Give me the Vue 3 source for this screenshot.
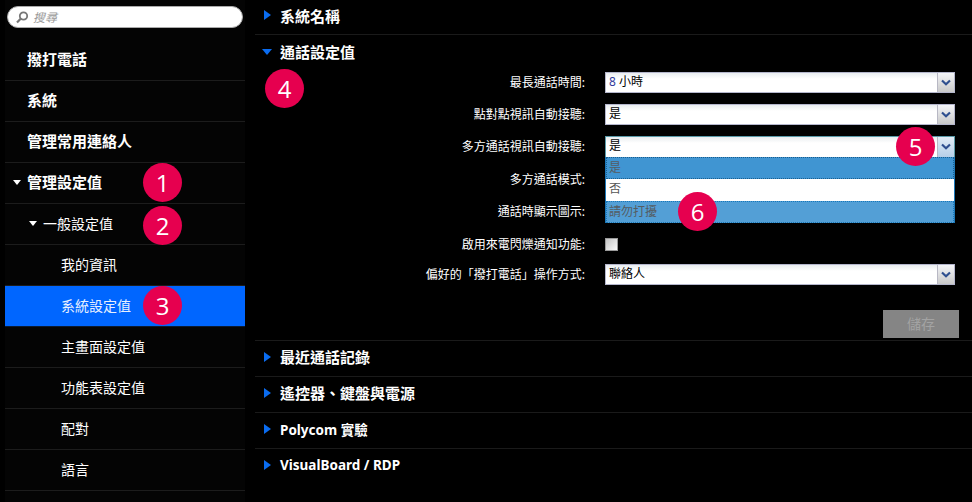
<script setup>
const nav = [
  { label: '撥打電話', level: 0 },
  { label: '系統', level: 0 },
  { label: '管理常用連絡人', level: 0 },
  { label: '管理設定值', level: 0, open: true },
  { label: '一般設定值', level: 1, open: true },
  { label: '我的資訊', level: 2 },
  { label: '系統設定值', level: 2, active: true },
  { label: '主畫面設定值', level: 2 },
  { label: '功能表設定值', level: 2 },
  { label: '配對', level: 2 },
  { label: '語言', level: 2 },
]
const after = [
  { label: '最近通話記錄' },
  { label: '遙控器、鍵盤與電源' },
  { label: 'Polycom 實驗', tight: true },
  { label: 'VisualBoard / RDP', tight: true },
]
const badges = [
  { n: 1, x: 143, y: 163 },
  { n: 2, x: 143, y: 206 },
  { n: 3, x: 143, y: 286 },
  { n: 4, x: 265, y: 69 },
  { n: 5, x: 896, y: 127 },
  { n: 6, x: 678, y: 192 },
]
</script>

<template>
  <div class="page">
    <aside class="sidebar">
      <div class="search">
        <svg class="mag" width="13" height="13" viewBox="0 0 13 13">
          <circle cx="7.5" cy="5" r="3.700" fill="none" stroke="#777" stroke-width="1.800" />
          <path d="M4.900 7.600 1 11.600" stroke="#777" stroke-width="2.200" fill="none" />
        </svg>
        <span class="search-text">搜尋</span>
      </div>
      <nav class="nav">
        <div
          v-for="item in nav"
          :key="item.label"
          class="nav-item"
          :class="['lv' + item.level, { active: item.active }]"
        >
          <span v-if="item.open" class="tri"></span>
          <span>{{ item.label }}</span>
        </div>
      </nav>
    </aside>

    <main class="main">
      <div class="section first">
        <span class="arrow-r"></span><span>系統名稱</span>
      </div>
      <div class="section open">
        <span class="arrow-d"></span><span>通話設定值</span>
      </div>

      <div class="form">
        <div class="row">
          <label>最長通話時間:</label>
          <div class="select"><span class="val"><span class="eight">8</span> 小時</span><span class="btn"><svg width="12" height="8" viewBox="0 0 12 8"><path d="M2 1.500 6 5.200 10 1.500" fill="none" stroke="#2f4f8f" stroke-width="2.200" /></svg></span></div>
        </div>
        <div class="row">
          <label>點對點視訊自動接聽:</label>
          <div class="select"><span class="val">是</span><span class="btn"><svg width="12" height="8" viewBox="0 0 12 8"><path d="M2 1.500 6 5.200 10 1.500" fill="none" stroke="#2f4f8f" stroke-width="2.200" /></svg></span></div>
        </div>
        <div class="row">
          <label>多方通話視訊自動接聽:</label>
          <div class="select-wrap">
            <div class="select focus"><span class="val">是</span><span class="btn hot"><svg width="12" height="8" viewBox="0 0 12 8"><path d="M2 1.500 6 5.200 10 1.500" fill="none" stroke="#2f4f8f" stroke-width="2.200" /></svg></span></div>
            <div class="menu">
              <div class="opt sel">是</div>
              <div class="opt">否</div>
              <div class="opt hover">請勿打擾</div>
            </div>
          </div>
        </div>
        <div class="row r33">
          <label>多方通話模式:</label>
        </div>
        <div class="row">
          <label>通話時顯示圖示:</label>
        </div>
        <div class="row r34">
          <label>啟用來電閃爍通知功能:</label>
          <span class="check"></span>
        </div>
        <div class="row last">
          <label>偏好的「撥打電話」操作方式:</label>
          <div class="select"><span class="val">聯絡人</span><span class="btn"><svg width="12" height="8" viewBox="0 0 12 8"><path d="M2 1.500 6 5.200 10 1.500" fill="none" stroke="#2f4f8f" stroke-width="2.200" /></svg></span></div>
        </div>
        <div class="actions"><button class="save" type="button">儲存</button></div>
      </div>

      <div v-for="s in after" :key="s.label" class="section" :class="{ tight: s.tight }">
        <span class="arrow-r"></span><span>{{ s.label }}</span>
      </div>
    </main>

    <span
      v-for="b in badges"
      :key="b.n"
      class="badge"
      :style="{ left: b.x + 'px', top: b.y + 'px' }"
    >{{ b.n }}</span>
  </div>
</template>

<style>
html, body { margin: 0; background: #000; }
</style>

<style scoped>
.page {
  position: relative;
  display: flex;
  width: 972px;
  height: 502px;
  overflow: hidden;
  background: #000;
  color: #fff;
  font-family: "Noto Sans", "Noto Sans CJK TC", sans-serif;
}
.sidebar {
  width: 240px;
  margin-left: 5px;
  flex: none;
  background: #040404;
}
.search {
  box-sizing: border-box;
  display: flex;
  align-items: center;
  gap: 4px;
  width: 236px;
  height: 22px;
  margin: 6px 0 0 2px;
  padding-left: 8px;
  background: #fff;
  border: 1px solid #aaa;
  border-radius: 11px;
}
.search-text {
  font-size: 12px;
  font-style: italic;
  color: #999;
}
.nav { margin-top: 12px; }
.nav-item {
  box-sizing: border-box;
  display: flex;
  align-items: center;
  height: 41px;
  border-bottom: 1px solid #1c1c1c;
  padding-left: 22px;
  padding-bottom: 4px;
  font-size: 15px;
  font-weight: 700;
}
.nav-item.lv1 {
  padding-left: 38px;
  padding-bottom: 3px;
  font-size: 14px;
  font-weight: 400;
}
.nav-item.lv2 {
  padding-left: 56px;
  padding-bottom: 3px;
  font-size: 14px;
  font-weight: 400;
}
.nav-item.active {
  background: #0066ff;
  color: #e8f0ff;
  border-bottom-color: #0a1a30;
}
.tri {
  position: absolute;
  width: 0;
  height: 0;
  border-left: 4px solid transparent;
  border-right: 4px solid transparent;
  border-top: 5px solid #fff;
  margin-left: -14px;
  margin-top: 2px;
}
.main {
  flex: 1;
  min-width: 0;
  margin-left: 10px;
}
.section {
  box-sizing: border-box;
  display: flex;
  align-items: center;
  height: 36px;
  border-bottom: 1px solid #1a1a1a;
  padding-left: 25px;
  padding-bottom: 4px;
  font-size: 15px;
  font-weight: 700;
  position: relative;
}
.section.tight { font-size: 13.5px; }
.section.first { height: 35px; padding-bottom: 4px; }
.section.open { height: 31px; padding: 1px 0 0 25px; border-bottom: 0; }
.section:last-child { border-bottom: 0; }
.arrow-r {
  position: absolute;
  left: 9px;
  width: 0;
  height: 0;
  border-top: 5px solid transparent;
  border-bottom: 5px solid transparent;
  border-left: 7px solid #0a6cf0;
}
.arrow-d {
  position: absolute;
  left: 7px;
  width: 0;
  height: 0;
  margin-top: 1px;
  border-left: 5.500px solid transparent;
  border-right: 5.500px solid transparent;
  border-top: 6px solid #0a6cf0;
}
.form {
  box-sizing: border-box;
  height: 275px;
  border-bottom: 1px solid #1a1a1a;
  position: relative;
}
.row {
  display: flex;
  align-items: center;
  height: 32px;
  font-size: 12px;
}
.row.r33 { height: 33px; }
.row.r34 { height: 34px; }
.row.last { height: 26px; }
.row label {
  width: 330px;
  text-align: right;
  margin-right: 20px;
  flex: none;
  white-space: nowrap;
}
.select-wrap { position: relative; }
.select {
  box-sizing: border-box;
  display: flex;
  width: 350px;
  height: 21px;
  margin-top: 1px;
  background: linear-gradient(#e9edf0 0, #fff 6px);
  border: 1px solid #b4b6cc;
  color: #000;
}
.val {
  flex: 1;
  line-height: 18px;
  padding-left: 3px;
}
.eight { color: #333a9c; }
.btn {
  width: 16px;
  display: flex;
  align-items: center;
  justify-content: center;
  background: linear-gradient(#f4f5f8, #c9c9c9);
  border-left: 1px solid #b8b8c4;
}
.select.focus { border-color: #5a9aa8; border-bottom: 0; }
.btn.hot { background: linear-gradient(#e2ecf6, #b6cfe8); }
.menu {
  position: absolute;
  left: 0;
  top: 22px;
  box-sizing: border-box;
  width: 350px;
  border-left: 1px solid #1d78b8;
  border-right: 1px solid #1d78b8;
  background: #fff;
  z-index: 2;
}
.opt {
  box-sizing: border-box;
  height: 22px;
  line-height: 20px;
  padding-left: 3px;
  color: #555;
}
.opt.sel { background: #4095d2; border: 1px dotted #1a5f90; padding-left: 2px; color: #555c62; }
.opt.hover { background: #539fd6; border: 1px dotted #1a78b8; padding-left: 2px; color: #555c62; }
.check {
  box-sizing: border-box;
  width: 13px;
  height: 13px;
  background: linear-gradient(135deg, #c4c4c4, #fafafa);
  border: 1px solid #9a9a9a;
}
.actions {
  display: flex;
  justify-content: flex-end;
  margin-top: 23px;
  padding-right: 13px;
}
.save {
  width: 76px;
  height: 28px;
  border: 0;
  background: #858585;
  color: #a3a3a3;
  font-family: inherit;
  font-size: 14px;
  padding: 0 0 2px;
}
.badge {
  position: absolute;
  width: 39px;
  height: 39px;
  border-radius: 50%;
  background: #e6004f;
  color: #fff;
  display: flex;
  align-items: center;
  justify-content: center;
  font-size: 24px;
  font-family: "Open Sans", sans-serif;
  z-index: 5;
}
</style>
